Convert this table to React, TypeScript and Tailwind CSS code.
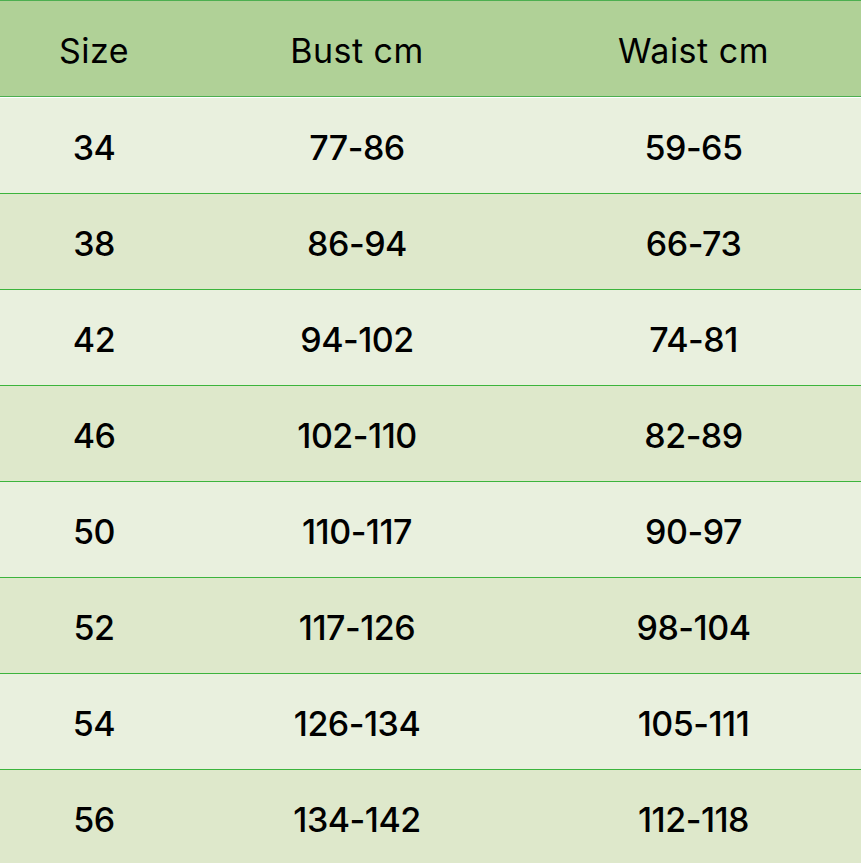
const rows = [
  ['34', '77-86', '59-65'],
  ['38', '86-94', '66-73'],
  ['42', '94-102', '74-81'],
  ['46', '102-110', '82-89'],
  ['50', '110-117', '90-97'],
  ['52', '117-126', '98-104'],
  ['54', '126-134', '105-111'],
  ['56', '134-142', '112-118'],
]

export default function App() {
  return (
    <div className="w-[861px] h-[863px] overflow-hidden bg-white font-['Inter',sans-serif] text-black">
      <div className="h-px bg-[#4caf50]" />
      <div className="bg-[#b0d197] grid grid-cols-[188px_338px_335px] h-[95px] items-center pt-1 text-[34px] tracking-[0.5px]">
        <div className="text-center">Size</div>
        <div className="text-center">Bust cm</div>
        <div className="text-center">Waist cm</div>
      </div>
      <div className="h-px bg-[#4caf50]" />
      <div className="h-px bg-white" />
      {rows.map((r, i) => (
        <div key={r[0]}>
          <div
            className={
              'grid grid-cols-[188px_338px_335px] h-[95px] items-center pt-1 text-[34px] font-medium tracking-[-0.5px] ' +
              (i % 2 === 0 ? 'bg-[#e9f0de]' : 'bg-[#dee8cb]')
            }
          >
            <div className="text-center">{r[0]}</div>
            <div className="text-center">{r[1]}</div>
            <div className="text-center">{r[2]}</div>
          </div>
          <div className="h-px bg-[#3cb43c]" />
        </div>
      ))}
    </div>
  )
}
